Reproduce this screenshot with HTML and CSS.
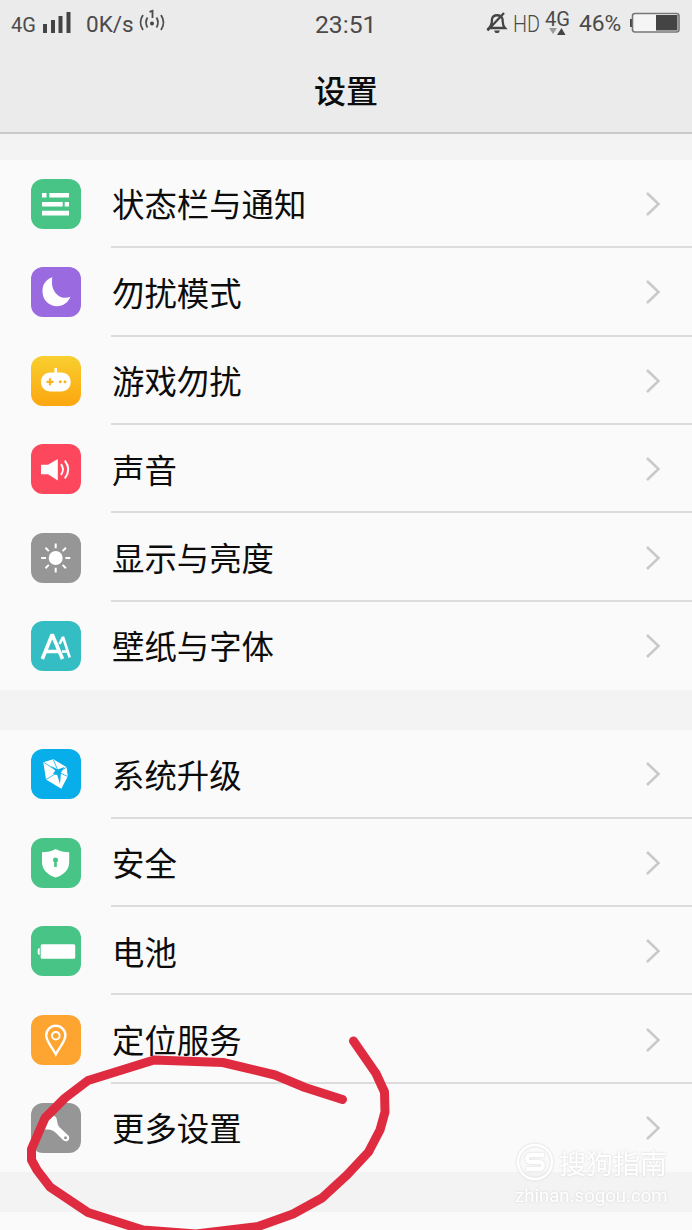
FILE: index.html
```html
<!DOCTYPE html>
<html lang="zh-CN">
<head>
<meta charset="utf-8">
<title>设置</title>
<link rel="stylesheet" href="styles.css">
</head>
<body>
<div class="screen">
  <header class="header">
    <div class="status">
      <div class="status-left">
        <span class="net">4G</span>
        <svg class="signal" width="30" height="26" viewBox="0 0 30 26"><path d="M1 14h4v9H1zM9 10h4v13H9zM16.500 6h4v17h-4zM24.500 2h4v21h-4z" fill="#444"/></svg>
        <span class="speed">0K/s</span>
        <svg class="hotspot" width="28" height="26" viewBox="0 0 28 26"><g fill="none" stroke="#4c4c4c" stroke-width="1.800"><path d="M5 7q-5 7.500 0 15M9.500 9.500q-3 5 0 10M18.500 9.500q3 5 0 10M23 7q5 7.500 0 15M11.500 3.800l3-1V10"/></g><circle cx="14" cy="15.500" r="2" fill="#444"/></svg>
      </div>
      <span class="clock">23:51</span>
      <div class="status-right">
        <svg class="bell" width="22" height="26" viewBox="0 0 22 26"><path d="M3 19h16c-3-3-2-6-2.500-9C15 5 7 5 6 10c0 3 0 6-3 9zM1.500 21.500L18 4" fill="none" stroke="#444" stroke-width="2.300"/><path d="M8 21.500h6l-1.500 2.500h-3z" fill="#444"/></svg>
        <svg class="hd" width="28" height="34" viewBox="0 0 28 34"><text x="0" y="26" textLength="27" lengthAdjust="spacingAndGlyphs">HD</text></svg>
        <svg class="data" width="26" height="38" viewBox="0 0 26 38"><text x="0" y="22" textLength="25" lengthAdjust="spacingAndGlyphs">4G</text><path d="M4 24h8l-4 6z" fill="#999"/><path d="M12 31l4.500-7 4 7z" fill="#444"/></svg>
        <span class="percent">46%</span>
        <svg class="battery" width="52" height="24" viewBox="0 0 52 24"><path d="M0 9h2v8H0z" fill="#444"/><rect x="2.500" y="3.500" width="46.500" height="18.500" rx="2.500" fill="#f5f5f5" stroke="#777" stroke-width="1.600"/><path d="M26 5h21.500v15.500H26z" fill="#444"/></svg>
      </div>
    </div>
    <h1 class="title">设置</h1>
  </header>

  <main class="content">
    <section class="group">
      <div class="row">
        <svg class="icon" viewBox="0 0 50 50"><rect width="50" height="50" rx="12" fill="#48c586"/><path d="M11 14h4.500v4.600H11zM18.300 14H38v4.600H18.300zM11 22.900h20.700v4.600H11zM33.700 22.900H38v4.600h-4.300zM11 31.800h27v4.600H11z" fill="#fff"/></svg>
        <div class="cell"><span class="label">状态栏与通知</span><svg class="chevron" viewBox="0 0 16 26"><path d="M2 2l11.500 11L2 24"/></svg></div>
      </div>
      <div class="row">
        <svg class="icon" viewBox="0 0 50 50"><rect width="50" height="50" rx="12" fill="#9a6ae0"/><path d="M21.300 10.300C14 13 11.500 18 11.500 24.500 11.500 33 18 39.200 26 39.200c6 0 11.500-4 13.300-9.500-4 2-9 1.500-13-2-5-4.400-6-10.500-5-17.400z" fill="#fff"/></svg>
        <div class="cell"><span class="label">勿扰模式</span><svg class="chevron" viewBox="0 0 16 26"><path d="M2 2l11.500 11L2 24"/></svg></div>
      </div>
      <div class="row">
        <svg class="icon" viewBox="0 0 50 50"><defs><linearGradient id="gold" x2="0" y2="1"><stop stop-color="#f9cf2f"/><stop offset="1" stop-color="#fca60f"/></linearGradient></defs><rect width="50" height="50" rx="12" fill="url(#gold)"/><path d="M23.500 12h2.500v4.500h4c6 0 9.700 4 9.700 9.500s-4 9.500-9.700 9.500H19.500C14 35.500 10 31.500 10 26s4-9.500 9.500-9.500h4z" fill="#fff"/><path d="M15.500 25.800h7M19 22.300v7" stroke="#fbb31b" stroke-width="2.200"/><circle cx="29.300" cy="25.800" r="1.500" fill="#fbb31b"/><circle cx="34" cy="25.800" r="1.500" fill="#fbb31b"/></svg>
        <div class="cell"><span class="label">游戏勿扰</span><svg class="chevron" viewBox="0 0 16 26"><path d="M2 2l11.500 11L2 24"/></svg></div>
      </div>
      <div class="row">
        <svg class="icon" viewBox="0 0 50 50"><rect width="50" height="50" rx="12" fill="#fd475c"/><path d="M10 20.700h7l9.800-5.700v21.500L17 30.200h-7z" fill="#fff"/><path d="M30 20.200q4 5.300 0 10.800M33.800 16.700q7 8.800 0 17.700" fill="none" stroke="#fff" stroke-width="2"/></svg>
        <div class="cell"><span class="label">声音</span><svg class="chevron" viewBox="0 0 16 26"><path d="M2 2l11.500 11L2 24"/></svg></div>
      </div>
      <div class="row">
        <svg class="icon" viewBox="0 0 50 50"><rect width="50" height="50" rx="12" fill="#969696"/><circle cx="24.700" cy="25" r="7" fill="#fff"/><path d="M24.700 10.500v4.800M24.700 34.700v4.800M10.200 25H15M34.400 25h4.800M14.500 14.800l3.300 3.300M31.600 31.900l3.300 3.300M34.900 14.800l-3.300 3.300M17.800 31.900l-3.300 3.300" stroke="#fff" stroke-width="2"/></svg>
        <div class="cell"><span class="label">显示与亮度</span><svg class="chevron" viewBox="0 0 16 26"><path d="M2 2l11.500 11L2 24"/></svg></div>
      </div>
      <div class="row">
        <svg class="icon" viewBox="0 0 50 50"><rect width="50" height="50" rx="12" fill="#35bdc4"/><path d="M11.300 38l9.900-24.500L31.500 38M14.800 30.500h13.500" fill="none" stroke="#fff" stroke-width="3.600" stroke-linejoin="bevel"/><path d="M28.500 23l3.500-7 6.700 20.500M31 30.500h6" fill="none" stroke="#fff" stroke-width="2.600" stroke-linejoin="bevel"/></svg>
        <div class="cell"><span class="label">壁纸与字体</span><svg class="chevron" viewBox="0 0 16 26"><path d="M2 2l11.500 11L2 24"/></svg></div>
      </div>
    </section>

    <section class="group">
      <div class="row">
        <svg class="icon" viewBox="0 0 50 50"><rect width="50" height="50" rx="12" fill="#08aee9"/><path d="M12.300 13.200l10-3 13.400 8 1 9.200-6.400 12.400-15.300-9.300z" fill="#fff"/><path d="M27.500 23L13 13.500M27.500 23l8.200-4.800M27.500 23l9 4.500M27.500 23L15 30.500M27.500 23l-5-12" stroke="#08aee9" stroke-width=".8"/><path d="M19.500 16.500l7 4 7-2.500-3.500 5.500-1 11.500-2.800-9-4.200-1 2.300-3.500z" fill="#08aee9"/></svg>
        <div class="cell"><span class="label">系统升级</span><svg class="chevron" viewBox="0 0 16 26"><path d="M2 2l11.500 11L2 24"/></svg></div>
      </div>
      <div class="row">
        <svg class="icon" viewBox="0 0 50 50"><rect width="50" height="50" rx="12" fill="#48c586"/><path d="M24.700 11c4 2.300 8.300 3.200 13.500 3.300V24c0 8-5.500 13-13.500 15.500C16.700 37 11 32 11 24v-9.700c5.200-.1 9.700-1 13.700-3.300z" fill="#fff"/><circle cx="24.500" cy="22" r="2.500" fill="#48c586"/><path d="M23.200 22h2.600v7h-2.600z" fill="#48c586"/></svg>
        <div class="cell"><span class="label">安全</span><svg class="chevron" viewBox="0 0 16 26"><path d="M2 2l11.500 11L2 24"/></svg></div>
      </div>
      <div class="row">
        <svg class="icon" viewBox="0 0 50 50"><rect width="50" height="50" rx="12" fill="#48c586"/><rect x="9.700" y="18.300" width="34.500" height="14.500" rx="1.500" fill="#fff"/><path d="M8.700 22v7q-2 0-2-2v-3q0-2 2-2z" fill="#fff"/></svg>
        <div class="cell"><span class="label">电池</span><svg class="chevron" viewBox="0 0 16 26"><path d="M2 2l11.500 11L2 24"/></svg></div>
      </div>
      <div class="row">
        <svg class="icon" viewBox="0 0 50 50"><rect width="50" height="50" rx="12" fill="#fda431"/><path d="M24.800 39.300C21 32 15.200 26.500 15.200 20.300c0-5.300 4.300-9.500 9.600-9.500s9.600 4.200 9.600 9.500c0 6.200-5.800 11.700-9.600 19z" fill="none" stroke="#fff" stroke-width="2.400"/><circle cx="24.800" cy="20.700" r="3.800" fill="none" stroke="#fff" stroke-width="2"/></svg>
        <div class="cell"><span class="label">定位服务</span><svg class="chevron" viewBox="0 0 16 26"><path d="M2 2l11.500 11L2 24"/></svg></div>
      </div>
      <div class="row">
        <svg class="icon" viewBox="0 0 50 50"><rect width="50" height="50" rx="12" fill="#969696"/><path d="M13 26.500c4 0 8-.5 11.500 3l7.800 7.800c4 3 7.700-1.300 5-4.800l-8.500-8c-3-3-2-6.500-3.800-10.500L19 11z" fill="#fff"/><circle cx="34.500" cy="34.700" r="1.500" fill="#969696"/></svg>
        <div class="cell"><span class="label">更多设置</span><svg class="chevron" viewBox="0 0 16 26"><path d="M2 2l11.500 11L2 24"/></svg></div>
      </div>
    </section>
    <section class="group group-next"></section>
  </main>

  <svg class="scribble" viewBox="0 0 692 1230"><path d="M353.500 1041L376 1073.500 384.500 1092 385 1112 380 1130 368.500 1152 347 1175 322 1198 293 1214 258 1226.500 196 1234 143 1230 88 1212.500 50 1187 37 1170 31.500 1160 31.500 1149 45 1118 65 1098 88 1080.500 154 1060 223 1062.500 275 1075 305 1087.500 342.500 1099.500"/></svg>

  <div class="watermark">
    <div class="brand">
      <svg width="40" height="40" viewBox="0 0 40 40"><g fill="none" stroke="#fff"><circle cx="20" cy="20" r="17" stroke-width="2.500"/><path d="M29 13H17q-5 0-5 3.500t5 3.500h6q5 0 5 3.500T23 27H11" stroke-width="4"/></g></svg>
      <span>搜狗指南</span>
    </div>
    <div class="site">zhinan.sogou.com</div>
  </div>
</div>
</body>
</html>
```
FILE: styles.css
```css
body { margin: 0; }

.screen {
  position: relative;
  width: 692px;
  height: 1230px;
  overflow: hidden;
  background: #f3f3f3;
  color: #0c0c0c;
  font-family: Roboto, "Noto Sans CJK SC", sans-serif;
}

.header {
  box-sizing: border-box;
  height: 134px;
  background: #ebebeb;
  border-bottom: 2px solid #cacaca;
}

.status {
  display: grid;
  grid-template-columns: 315px 1fr 206px;
  height: 48px;
  color: #4a4a4a;
  line-height: 48px;
  white-space: nowrap;
}

.status-left,
.status-right { display: flex; align-items: center; height: 46px; line-height: 44px; }
.status svg { flex: none; display: block; overflow: visible; }
.status text { fill: #4a4a4a; font-family: Roboto, sans-serif; }

.net { width: 31px; padding: 4px 0 0 11px; font-size: 20px; }
.signal { margin-bottom: 1px; }
.speed { width: 52px; margin-left: 14px; padding-top: 2px; font-size: 22.5px; }
.hotspot { margin-bottom: 5px; }
.clock { padding-top: 1px; font-size: 24.7px; }
.bell { margin-bottom: 2px; }
.hd { margin: 0 4px 0 5px; font-size: 24.5px; font-weight: 300; }
.data { font-size: 20px; }
.percent { width: 51px; margin-left: 8px; padding-top: 2px; font-size: 22.8px; }
.battery { margin-bottom: 3px; }

.title {
  margin: 20px 0 0;
  font-size: 32px;
  font-weight: 500;
  line-height: 48px;
  text-align: center;
}

.content { padding-top: 25.8px; }

.group {
  margin-bottom: 40px;
  background: #fafafa;
}

.group-next { height: 40px; }

.row {
  display: flex;
  align-items: center;
  height: 88.4px;
  padding-left: 31px;
}

.icon { flex: none; width: 50px; height: 50px; margin-right: 30px; }

.cell {
  box-sizing: border-box;
  display: flex;
  flex: 1;
  align-items: center;
  justify-content: space-between;
  height: 100%;
  padding-right: 31px;
  border-bottom: 2px solid #dcdcdc;
}

.row:last-child .cell { border-bottom-color: transparent; }
.label { padding: 7px 0 0 1px; font-size: 32.4px; line-height: 48px; }
.chevron { width: 16px; height: 26px; margin-top: 2px; }
.chevron path { fill: none; stroke: #c9c9c9; stroke-width: 2.5; }

.scribble {
  position: absolute;
  inset: 0;
  width: 692px;
  height: 1230px;
}

.scribble path {
  fill: none;
  stroke: #df2b3f;
  stroke-width: 9;
  stroke-linecap: round;
  stroke-linejoin: round;
}

.watermark {
  position: absolute;
  top: 1142px;
  left: 515px;
  color: #fff;
  filter: drop-shadow(0 0 1px #d4d4d4);
}

.brand { display: flex; align-items: center; gap: 4px; height: 40px; font-size: 27px; }
.site { margin-top: 1px; font-size: 18.6px; line-height: 26px; }
```
